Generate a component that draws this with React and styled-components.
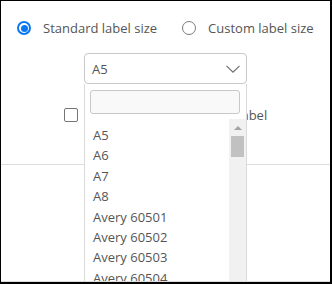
import React from "react";
import styled, { createGlobalStyle } from "styled-components";

const GlobalStyle = createGlobalStyle`
  html, body {
    margin: 0;
    padding: 0;
    background: #fff;
  }
  * {
    box-sizing: border-box;
  }
`;

const Frame = styled.div`
  width: 332px;
  height: 284px;
  border-style: solid;
  border-color: #000;
  border-width: 1px 2px 2px 1px;
  background: #fff;
  font-family: "Open Sans", "Liberation Sans", sans-serif;
  font-size: 13px;
  color: #555;
`;

const Panel = styled.div`
  position: relative;
  height: 100%;
  border-bottom: 1px solid #dcdcdc;
  overflow: hidden;
`;

const Body = styled.div`
  box-sizing: content-box;
  height: 145px;
  padding-top: 18px;
  border-bottom: 1px solid #dedede;
`;

const RadioRow = styled.div`
  display: flex;
  align-items: center;
  padding-left: 16px;
  height: 18px;
`;

const RadioOption = styled.label`
  display: flex;
  align-items: center;
  gap: 12px;
  line-height: 18px;
  white-space: nowrap;
  margin-right: 25px;
`;

const RadioDot = styled.span`
  position: relative;
  width: 14px;
  height: 14px;
  border-radius: 50%;
  border: ${(p) => (p.$checked ? "2px solid #0a78f5" : "1px solid #7a7a7a")};
  flex-shrink: 0;

  &::after {
    content: "";
    display: ${(p) => (p.$checked ? "block" : "none")};
    position: absolute;
    left: 50%;
    top: 50%;
    width: 7px;
    height: 7px;
    margin: -3.5px 0 0 -3.5px;
    border-radius: 50%;
    background: #0a78f5;
  }
`;

const SelectWrap = styled.div`
  position: relative;
  width: 163px;
  margin: 16px auto 0;
`;

const SelectBox = styled.div`
  display: flex;
  align-items: center;
  justify-content: space-between;
  height: 31px;
  padding: 0 6px 0 7px;
  border: 1px solid #c9c9c9;
  border-radius: 4px;
  background: #fff;
`;

const Dropdown = styled.div`
  position: absolute;
  top: 100%;
  left: 0;
  width: 163px;
  padding-top: 6px;
  background: #fff;
  border: 1px solid #dadada;
  border-top: none;
  z-index: 5;
`;

const SearchBox = styled.div`
  height: 24px;
  margin: 0 6px 0 5px;
  border: 1px solid #c8c8c8;
  border-radius: 3px;
  background: #f9f9f9;
`;

const ListArea = styled.div`
  display: flex;
  margin-top: 5px;
  height: 220px;
`;

const Items = styled.ul`
  flex: 1;
  list-style: none;
  margin: 0;
  padding: 6px 0 0 8px;
  overflow: hidden;
`;

const Item = styled.li`
  line-height: 20.4px;
  white-space: nowrap;
`;

const ScrollBar = styled.div`
  width: 17px;
  background: #f1f1f1;
  display: flex;
  flex-direction: column;
  align-items: center;
`;

const ScrollArrow = styled.div`
  height: 17px;
  display: flex;
  align-items: center;
  justify-content: center;
`;

const ScrollThumb = styled.div`
  width: 13px;
  height: 21px;
  background: #c1c1c1;
`;

const CheckRow = styled.div`
  display: flex;
  align-items: center;
  justify-content: center;
  gap: 12px;
  margin-top: 22px;
  height: 18px;
  line-height: 18px;
  white-space: nowrap;
`;

const CheckBox = styled.span`
  width: 14px;
  height: 14px;
  border: 1px solid #767676;
  border-radius: 2px;
  background: #fff;
`;

const Footer = styled.div`
  height: 100px;
`;

const sizes = [
  "A5",
  "A6",
  "A7",
  "A8",
  "Avery 60501",
  "Avery 60502",
  "Avery 60503",
  "Avery 60504",
  "Avery 60505",
  "Avery 60506",
];

export default function App() {
  return (
    <>
      <GlobalStyle />
      <Frame>
        <Panel>
          <Body>
            <RadioRow>
              <RadioOption>
                <RadioDot $checked />
                Standard label size
              </RadioOption>
              <RadioOption>
                <RadioDot />
                Custom label size
              </RadioOption>
            </RadioRow>
            <SelectWrap>
              <SelectBox>
                <span>A5</span>
                <svg width="14" height="8" viewBox="0 0 14 8">
                  <polyline
                    points="0.5,0.8 7,7.2 13.5,0.8"
                    fill="none"
                    stroke="#6b6b6b"
                    strokeWidth="1.1"
                  />
                </svg>
              </SelectBox>
              <Dropdown>
                <SearchBox />
                <ListArea>
                  <Items>
                    {sizes.map((s) => (
                      <Item key={s}>{s}</Item>
                    ))}
                  </Items>
                  <ScrollBar>
                    <ScrollArrow>
                      <svg width="8" height="4" viewBox="0 0 8 4">
                        <polygon points="0,4 4,0 8,4" fill="#a3a3a3" />
                      </svg>
                    </ScrollArrow>
                    <ScrollThumb />
                  </ScrollBar>
                </ListArea>
              </Dropdown>
            </SelectWrap>
            <CheckRow>
              <CheckBox />
              Print border around the label
            </CheckRow>
          </Body>
          <Footer />
        </Panel>
      </Frame>
    </>
  );
}
